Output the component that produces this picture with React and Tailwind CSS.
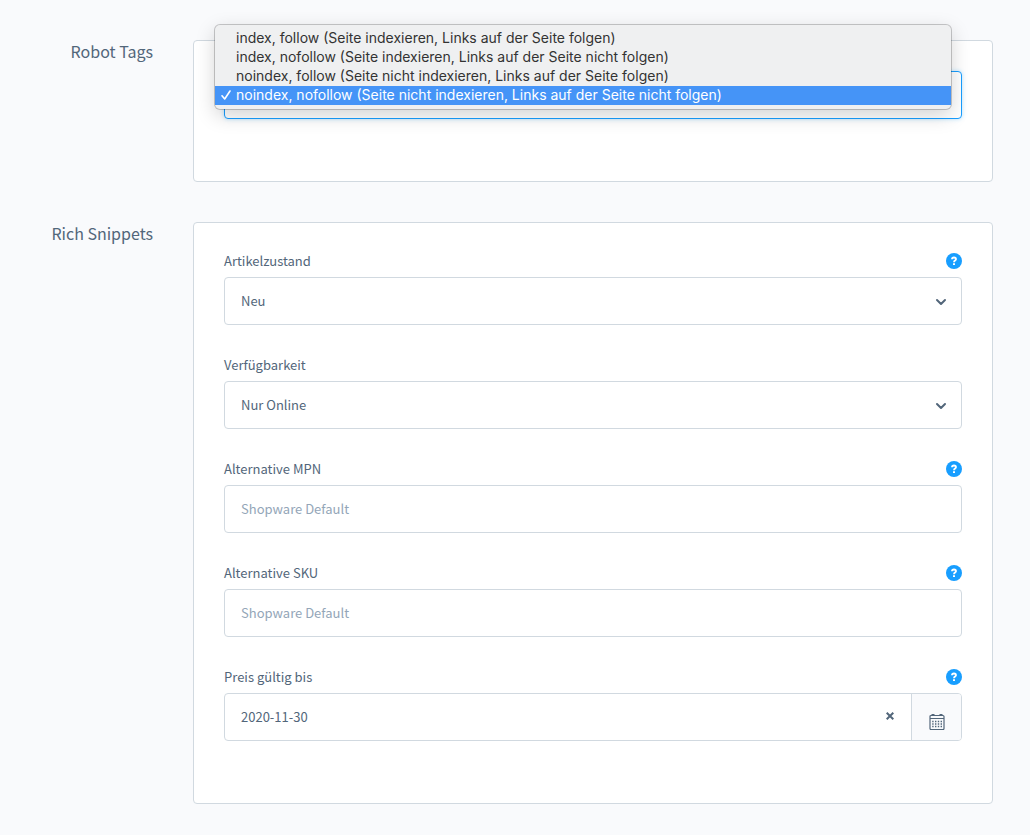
import React from 'react';
import clsx from 'clsx';

const robotOptions = [
  'index, follow (Seite indexieren, Links auf der Seite folgen)',
  'index, nofollow (Seite indexieren, Links auf der Seite nicht folgen)',
  'noindex, follow (Seite nicht indexieren, Links auf der Seite folgen)',
  'noindex, nofollow (Seite nicht indexieren, Links auf der Seite nicht folgen)',
];

const control =
  'block w-full h-12 rounded border border-[#d1d9e0] bg-white px-4 text-[13px] leading-5 text-[#52667a] outline-none';

const Section = ({ title, children }) => (
  <section className="grid grid-cols-[153px_minmax(0,1fr)] gap-10">
    <h2 className="text-right text-base leading-[22px] text-[#52667a]">{title}</h2>
    <div className="rounded border border-[#d1d9e0] bg-white p-[30px]">{children}</div>
  </section>
);

const HelpButton = () => (
  <button type="button" aria-label="Hilfe" className="size-4">
    <svg viewBox="0 0 16 16" className="size-4" fill="none">
      <circle cx="8" cy="8" r="8" fill="#189eff" />
      <path d="M6 6.3C6 5.1 6.9 4.5 8 4.5s2 .7 2 1.7c0 1.4-2 1.4-2 3" stroke="#fff" strokeWidth="1.8" />
      <path d="M7 10.3h2v1.8H7z" fill="#fff" />
    </svg>
  </button>
);

const Field = ({ id, label, help, children }) => (
  <div className="mb-8">
    <div className="mb-2 flex h-4 items-center justify-between">
      <label htmlFor={id} className="text-[13px] leading-4 text-[#52667a]">
        {label}
      </label>
      {help && <HelpButton />}
    </div>
    {children}
  </div>
);

const Select = ({ id, value }) => (
  <div className="relative">
    <select id={id} defaultValue={value} className={clsx(control, 'appearance-none')}>
      <option>{value}</option>
    </select>
    <svg
      viewBox="0 0 12 8"
      className="pointer-events-none absolute right-[15px] top-[21px] h-2 w-3"
      fill="none"
      stroke="#52667a"
      strokeWidth="2"
      strokeLinecap="round"
      strokeLinejoin="round"
    >
      <path d="M2 2l4 4 4-4" />
    </svg>
  </div>
);

const TextInput = ({ id, placeholder }) => (
  <input
    id={id}
    type="text"
    placeholder={placeholder}
    className={clsx(control, 'pb-0.5 placeholder:text-[#94a6b8] placeholder:opacity-100')}
  />
);

const RobotMenu = () => (
  <ul
    role="listbox"
    aria-label="Robot Tags"
    className="absolute -left-[9px] -top-[46px] right-[11px] rounded-[5px] bg-[#eff0f1] py-1 font-['Inter',sans-serif] text-sm leading-[17px] text-[#333] shadow-[0_0_0_1px_rgba(0,0,0,0.2),0_6px_20px_rgba(0,0,0,0.18)]"
  >
    {robotOptions.map((option, i) => {
      const selected = i === robotOptions.length - 1;
      return (
        <li
          key={option}
          role="option"
          aria-selected={selected}
          className={clsx('flex items-center pb-0.5', selected && 'bg-[#4594f7] text-white')}
        >
          <span className="flex w-[21px] shrink-0 justify-center">
            {selected && (
              <svg viewBox="0 0 10 10" className="size-2.5" fill="none" stroke="currentColor" strokeWidth="1.6" strokeLinecap="round" strokeLinejoin="round">
                <path d="M1 5.8L3.7 9 9 1" />
              </svg>
            )}
          </span>
          {option}
        </li>
      );
    })}
  </ul>
);

const CalendarIcon = () => (
  <svg viewBox="0 0 16 16" className="size-4" fill="none" stroke="#52667a">
    <rect x="1" y="1.5" width="14" height="14" rx="1" strokeWidth="1.2" />
    <path d="M1 4.5h14" strokeWidth="1.2" />
    <path d="M2.5.8h3M10.5.8h3" strokeWidth="1.6" />
    <path d="M3.2 7.5h10M3.2 10h10M3.2 12.5h10" strokeWidth="1.4" strokeDasharray="1.4 1.4" />
  </svg>
);

const App = () => (
  <main className="min-h-screen space-y-10 bg-[#f9fafc] py-10 pr-[37px] pb-[31px] font-['Noto_Sans_CJK_JP',sans-serif]">
    <Section title="Robot Tags">
      <div className="relative mb-8">
        <select
          aria-label="Robot Tags"
          defaultValue={robotOptions[3]}
          className="block h-12 w-full appearance-none rounded border border-[#189eff] bg-white px-4 text-[13px] text-transparent shadow-[0_0_4px_rgba(24,158,255,0.3)] outline-none"
        >
          {robotOptions.map((option) => (
            <option key={option}>{option}</option>
          ))}
        </select>
        <RobotMenu />
      </div>
    </Section>

    <Section title="Rich Snippets">
      <Field id="condition" label="Artikelzustand" help>
        <Select id="condition" value="Neu" />
      </Field>
      <Field id="availability" label="Verfügbarkeit">
        <Select id="availability" value="Nur Online" />
      </Field>
      <Field id="mpn" label="Alternative MPN" help>
        <TextInput id="mpn" placeholder="Shopware Default" />
      </Field>
      <Field id="sku" label="Alternative SKU" help>
        <TextInput id="sku" placeholder="Shopware Default" />
      </Field>
      <Field id="validUntil" label="Preis gültig bis" help>
        <div className="flex h-12 overflow-hidden rounded border border-[#d1d9e0] bg-white">
          <input
            id="validUntil"
            type="text"
            defaultValue="2020-11-30"
            className="min-w-0 flex-1 px-4 text-[13px] leading-5 text-[#52667a] outline-none"
          />
          <button type="button" aria-label="Datum löschen" className="flex w-[42px] items-center justify-center pb-0.5">
            <svg viewBox="0 0 8 8" className="size-2" stroke="#52667a" strokeWidth="2">
              <path d="M.7.7l6.6 6.6M7.3.7L.7 7.3" />
            </svg>
          </button>
          <button
            type="button"
            aria-label="Kalender öffnen"
            className="flex w-[50px] items-center justify-center border-l border-[#d1d9e0] bg-[#f9fafc] pt-2.5"
          >
            <CalendarIcon />
          </button>
        </div>
      </Field>
    </Section>
  </main>
);

export default App;
